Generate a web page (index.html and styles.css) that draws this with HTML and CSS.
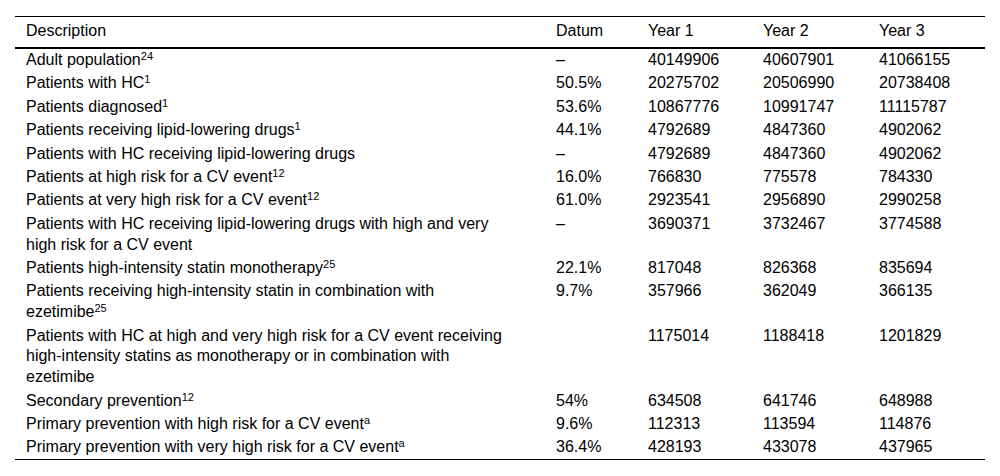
FILE: index.html
```html
<!DOCTYPE html>
<html lang="en">
<head>
<meta charset="utf-8">
<title>Table</title>
<link rel="stylesheet" href="styles.css">
</head>
<body>
<table class="data-table">
  <colgroup>
    <col class="col-desc">
    <col class="col-datum">
    <col class="col-y1">
    <col class="col-y2">
    <col class="col-y3">
  </colgroup>
  <thead>
    <tr>
      <th class="desc">Description</th>
      <th>Datum</th>
      <th>Year 1</th>
      <th>Year 2</th>
      <th>Year 3</th>
    </tr>
  </thead>
  <tbody>
    <tr><td class="desc">Adult population<sup>24</sup></td><td>–</td><td>40149906</td><td>40607901</td><td>41066155</td></tr>
    <tr><td class="desc">Patients with HC<sup>1</sup></td><td>50.5%</td><td>20275702</td><td>20506990</td><td>20738408</td></tr>
    <tr><td class="desc">Patients diagnosed<sup>1</sup></td><td>53.6%</td><td>10867776</td><td>10991747</td><td>11115787</td></tr>
    <tr><td class="desc">Patients receiving lipid-lowering drugs<sup>1</sup></td><td>44.1%</td><td>4792689</td><td>4847360</td><td>4902062</td></tr>
    <tr><td class="desc">Patients with HC receiving lipid-lowering drugs</td><td>–</td><td>4792689</td><td>4847360</td><td>4902062</td></tr>
    <tr><td class="desc">Patients at high risk for a CV event<sup>12</sup></td><td>16.0%</td><td>766830</td><td>775578</td><td>784330</td></tr>
    <tr><td class="desc">Patients at very high risk for a CV event<sup>12</sup></td><td>61.0%</td><td>2923541</td><td>2956890</td><td>2990258</td></tr>
    <tr><td class="desc">Patients with HC receiving lipid-lowering drugs with high and very high risk for a CV event</td><td>–</td><td>3690371</td><td>3732467</td><td>3774588</td></tr>
    <tr><td class="desc">Patients high-intensity statin monotherapy<sup>25</sup></td><td>22.1%</td><td>817048</td><td>826368</td><td>835694</td></tr>
    <tr><td class="desc"><span class="seg">Patients receiving high-intensity statin in combination with</span> <span class="seg">ezetimibe<sup>25</sup></span></td><td>9.7%</td><td>357966</td><td>362049</td><td>366135</td></tr>
    <tr><td class="desc">Patients with HC at high and very high risk for a CV event receiving high-intensity statins as monotherapy or in combination with ezetimibe</td><td></td><td>1175014</td><td>1188418</td><td>1201829</td></tr>
    <tr><td class="desc">Secondary prevention<sup>12</sup></td><td>54%</td><td>634508</td><td>641746</td><td>648988</td></tr>
    <tr><td class="desc">Primary prevention with high risk for a CV event<sup>a</sup></td><td>9.6%</td><td>112313</td><td>113594</td><td>114876</td></tr>
    <tr><td class="desc">Primary prevention with very high risk for a CV event<sup>a</sup></td><td>36.4%</td><td>428193</td><td>433078</td><td>437965</td></tr>
  </tbody>
</table>
</body>
</html>
```

FILE: styles.css
```css
html, body {
  margin: 0;
  padding: 0;
  background: #ffffff;
}

body {
  font-family: "Liberation Sans", Arial, sans-serif;
  font-size: 16px;
  color: #000000;
  padding: 16px 15px 0 15px;
}

.data-table {
  width: 970px;
  border-collapse: collapse;
  table-layout: fixed;
  border-top: 1px solid #000000;
  border-bottom: 1px solid #000000;
}

.col-desc { width: 530px; }
.col-datum { width: 92px; }
.col-y1 { width: 115px; }
.col-y2 { width: 116px; }
.col-y3 { width: 117px; }

.data-table th {
  font-weight: normal;
  text-align: left;
  line-height: 20.8px;
  padding: 4px 8px 5px 11px;
  border-bottom: 2px solid #000000;
  vertical-align: top;
}

.data-table td {
  text-align: left;
  line-height: 20.8px;
  padding: 1.3px 8px 1.3px 11px;
  vertical-align: top;
}

.data-table td.desc {
  padding-right: 43px;
}

.data-table sup {
  font-size: 11px;
  line-height: 0;
  vertical-align: 5px;
}
```
